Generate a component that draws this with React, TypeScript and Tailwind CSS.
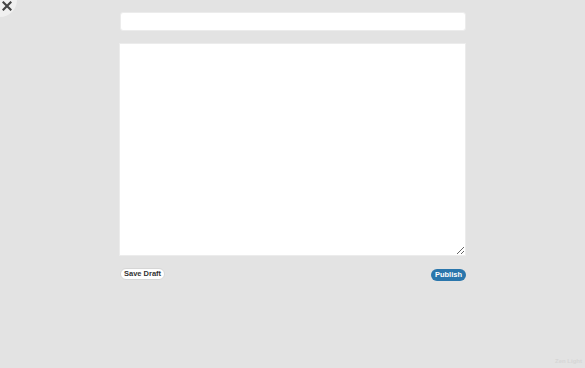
import React from "react";

const App = () => {
  return (
    <div className="relative w-[585px] h-[368px] overflow-hidden bg-[#e3e3e3] font-['Liberation_Sans',Arial,sans-serif]">
      {/* Close button */}
      <div className="absolute -left-[17px] -top-[17px] w-[34px] h-[34px] rounded-full bg-[#f0f0f0]" />
      <svg width="10" height="10" viewBox="0 0 10 10" className="absolute left-[2px] top-[1px]">
        <path d="M1.5 1.5 L8.5 8.5 M8.5 1.5 L1.5 8.5" stroke="#444" strokeWidth="2.2" strokeLinecap="square" />
      </svg>

      <div className="flex flex-col pl-[119px] pt-[12px] w-[467px] box-content">
        {/* Title */}
        <input
          type="text"
          className="ml-[1px] w-[346px] h-[19px] bg-white rounded-[3px] border border-[#ececec] outline-none"
        />

        {/* Body */}
        <textarea className="mt-[12px] w-[347px] h-[213px] bg-white border border-[#ececec] outline-none resize" />

        {/* Actions */}
        <div className="mt-[12px] ml-[1px] w-[346px] flex justify-between items-start">
          <button className="h-[12px] px-[3px] rounded-full bg-white border border-[#d6d6d6] text-[7.5px] font-bold text-[#333] leading-none">
            Save Draft
          </button>
          <button className="mt-[1px] h-[12px] px-[4px] rounded-full bg-[#2a76ac] text-[7.5px] font-bold text-white leading-none">
            Publish
          </button>
        </div>
      </div>

      <div className="absolute right-[3px] bottom-[2px] text-[6px] font-bold text-[#d6d6d6]">Zen Light</div>
    </div>
  );
};

export default App;
